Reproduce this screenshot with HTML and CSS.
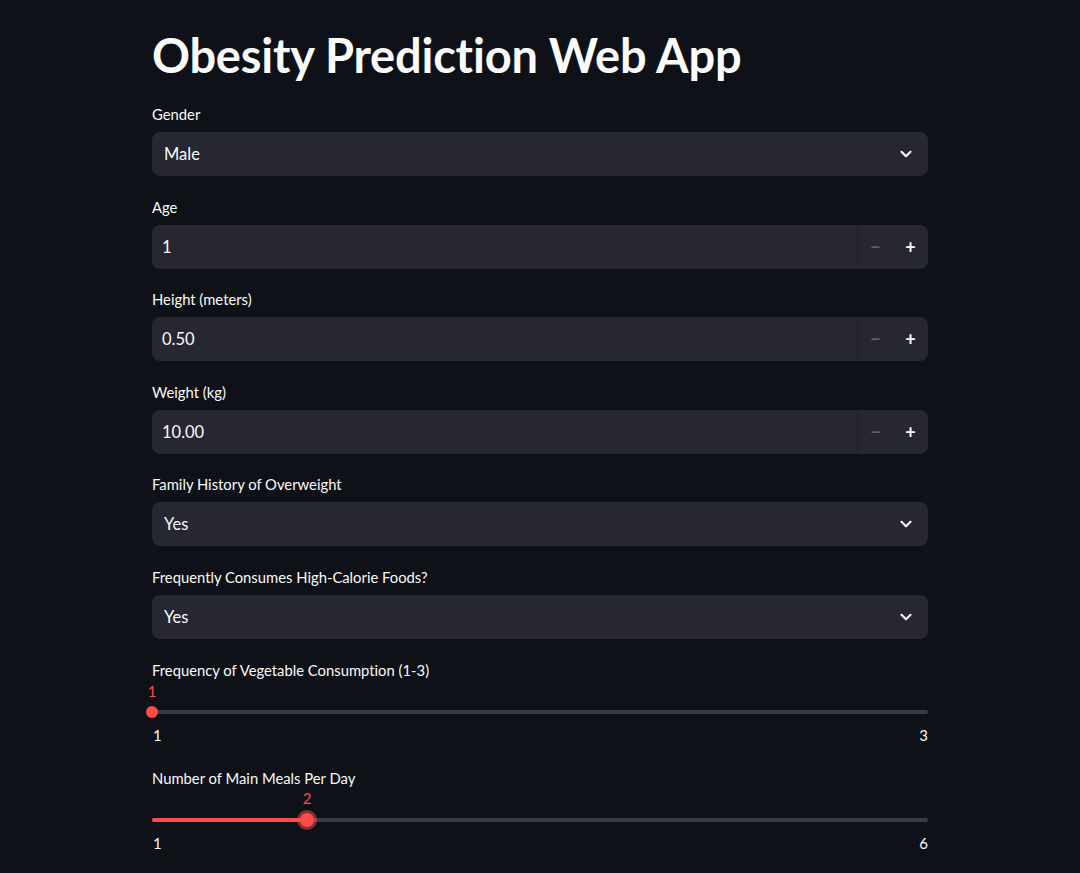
FILE: index.html
```html
<!DOCTYPE html>
<html>
<head>
<meta charset="utf-8">
<link rel="stylesheet" href="styles.css">
</head>
<body>
<main class="main">
  <h1 class="title">Obesity Prediction Web App</h1>

  <div class="widget">
    <label class="label">Gender</label>
    <div class="box select"><span class="val">Male</span>
      <svg class="chev" width="14" height="14" viewBox="0 0 14 14"><path d="M2.5 4.8 L7 9.2 L11.5 4.8" fill="none" stroke="#fafafa" stroke-width="2.2" stroke-linecap="round" stroke-linejoin="round"/></svg>
    </div>
  </div>

  <div class="widget">
    <label class="label">Age</label>
    <div class="box number"><span class="val num">1</span>
      <div class="steps"><span class="step minus">−</span><span class="step plus">+</span></div>
    </div>
  </div>

  <div class="widget">
    <label class="label">Height (meters)</label>
    <div class="box number"><span class="val num">0.50</span>
      <div class="steps"><span class="step minus">−</span><span class="step plus">+</span></div>
    </div>
  </div>

  <div class="widget">
    <label class="label">Weight (kg)</label>
    <div class="box number"><span class="val num">10.00</span>
      <div class="steps"><span class="step minus">−</span><span class="step plus">+</span></div>
    </div>
  </div>

  <div class="widget">
    <label class="label">Family History of Overweight</label>
    <div class="box select"><span class="val">Yes</span>
      <svg class="chev" width="14" height="14" viewBox="0 0 14 14"><path d="M2.5 4.8 L7 9.2 L11.5 4.8" fill="none" stroke="#fafafa" stroke-width="2.2" stroke-linecap="round" stroke-linejoin="round"/></svg>
    </div>
  </div>

  <div class="widget">
    <label class="label">Frequently Consumes High-Calorie Foods?</label>
    <div class="box select"><span class="val">Yes</span>
      <svg class="chev" width="14" height="14" viewBox="0 0 14 14"><path d="M2.5 4.8 L7 9.2 L11.5 4.8" fill="none" stroke="#fafafa" stroke-width="2.2" stroke-linecap="round" stroke-linejoin="round"/></svg>
    </div>
  </div>

  <div class="widget slider-widget">
    <label class="label">Frequency of Vegetable Consumption (1-3)</label>
    <div class="slider">
      <div class="track">
        <div class="fill" style="width:0%"></div>
        <div class="thumb" style="left:0%"><span class="thumb-val">1</span></div>
      </div>
      <div class="ticks"><span>1</span><span>3</span></div>
    </div>
  </div>

  <div class="widget slider-widget">
    <label class="label">Number of Main Meals Per Day</label>
    <div class="slider">
      <div class="track">
        <div class="fill" style="width:20%"></div>
        <div class="thumb focused" style="left:20%"><span class="thumb-val">2</span></div>
      </div>
      <div class="ticks"><span>1</span><span>6</span></div>
    </div>
  </div>
</main>
</body>
</html>
```

FILE: styles.css
```css
html, body {
  margin: 0;
  padding: 0;
  background: #0e1117;
  color: #fafafa;
  font-family: "Lato", "Noto Sans", sans-serif;
  font-variant-ligatures: none;
}

.main {
  width: 776px;
  margin: 0 auto;
  padding-top: 24px;
}

.title {
  margin: 0;
  font-size: 47px;
  font-weight: 700;
  line-height: 62px;
  height: 79px;
  letter-spacing: -0.2px;
}

.widget {
  display: flex;
  flex-direction: column;
  gap: 7px;
  margin-bottom: 19.6px;
}

.label {
  font-size: 14.8px;
  line-height: 22px;
  height: 22px;
}

.box {
  height: 44px;
  background: #262730;
  border-radius: 8px;
  display: flex;
  align-items: center;
  box-sizing: border-box;
  font-size: 16.5px;
}

.select {
  padding: 0 15px 0 12px;
  justify-content: space-between;
}

.number {
  padding-left: 10px;
}

.num {
  flex: 1;
}

.steps {
  display: flex;
  height: 100%;
  border-left: 1px solid #1f2028;
}

.step {
  width: 35px;
  display: flex;
  align-items: center;
  justify-content: center;
  font-size: 18px;
  font-weight: 700;
}

.minus {
  color: #5e5f68;
}

.plus {
  color: #fafafa;
}

.slider-widget {
  gap: 0;
  margin-bottom: 21px;
}

.slider {
  display: flex;
  flex-direction: column;
  padding-top: 29px;
}

.track {
  position: relative;
  height: 4px;
  border-radius: 2px;
  background: #3a3c45;
}

.fill {
  height: 100%;
  border-radius: 2px;
  background: #ff4b4b;
}

.thumb {
  position: absolute;
  top: 50%;
  width: 12px;
  height: 12px;
  margin-left: -6px;
  margin-top: -6px;
  border-radius: 50%;
  background: #ff4b4b;
}

.thumb.focused {
  width: 14px;
  height: 14px;
  margin-left: -7px;
  margin-top: -7px;
  box-shadow: 0 0 0 3px rgba(255, 75, 75, 0.5);
}

.thumb-val {
  position: absolute;
  bottom: 100%;
  left: 50%;
  transform: translateX(-50%);
  margin-bottom: 6px;
  color: #ff4b4b;
  font-size: 15px;
  line-height: 18px;
}

.ticks {
  display: flex;
  justify-content: space-between;
  font-size: 15px;
  line-height: 22px;
  margin-top: 10px;
  padding-left: 1px;
}
```
